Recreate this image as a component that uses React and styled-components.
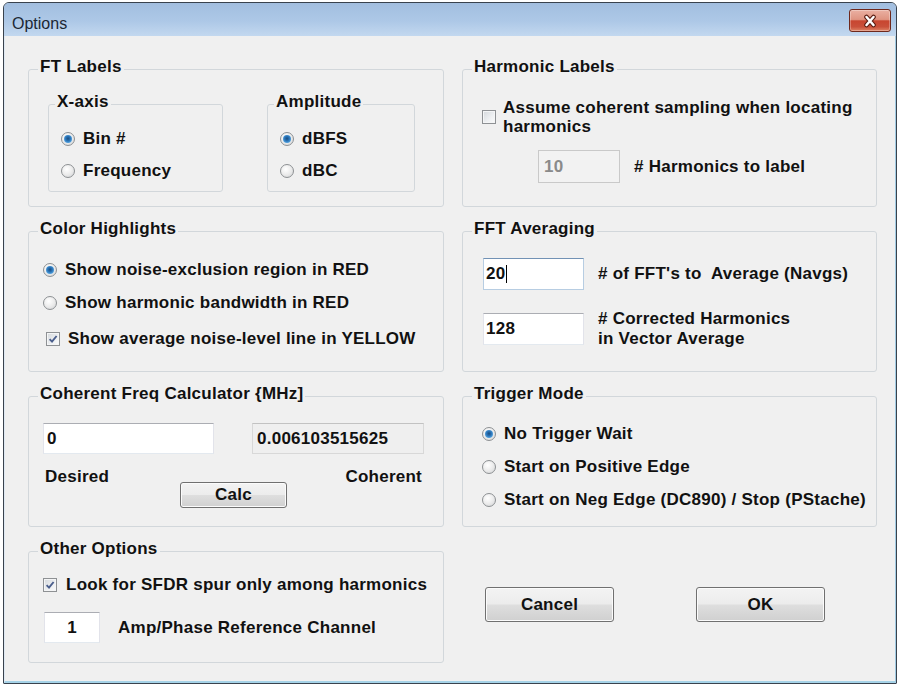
import React from "react";
import styled, { createGlobalStyle, css } from "styled-components";

const GlobalStyle = createGlobalStyle`
  html, body { margin: 0; padding: 0; background: #ffffff; }
  body { font-family: "Liberation Sans", Arial, sans-serif; color: #111; }
  * { box-sizing: border-box; }
`;

const Window = styled.div`
  margin: 2px 0 0 3px;
  width: 894px;
  height: 682px;
  border: 1px solid #39424d;
  border-radius: 6px 6px 1px 1px;
  background: #c2d8ef;
  display: flex;
  flex-direction: column;
  overflow: hidden;
`;

const TitleBar = styled.div`
  flex: none;
  height: 33px;
  display: flex;
  align-items: flex-start;
  justify-content: space-between;
  padding: 0 5px 0 8px;
  background: linear-gradient(to bottom, #a2bedf 0%, #adc8e7 55%, #c3d8ef 100%);
`;

const Title = styled.div`
  margin-top: 11px;
  font-size: 16px;
  line-height: 20px;
  color: #1b2734;
`;

const CloseButton = styled.div`
  margin-top: 6px;
  width: 42px;
  height: 23px;
  border: 1px solid #6e281c;
  border-radius: 3px;
  background: linear-gradient(
    to bottom,
    #eab0a2 0%,
    #df9481 45%,
    #c84630 52%,
    #c9503a 80%,
    #df8466 100%
  );
  box-shadow: inset 0 0 0 1px rgba(255, 255, 255, 0.3);
  display: flex;
  align-items: center;
  justify-content: center;
`;

const Client = styled.div`
  flex: 1;
  background: #f0f0f0;
  border-left: 1px solid #dfe9f3;
  border-right: 1px solid #a2cbe2;
  border-bottom: 2px solid #a6d3e8;
  display: grid;
  grid-template-columns: 416px 415px;
  grid-template-rows: 150px 153px 143px 124px;
  column-gap: 18px;
  row-gap: 12px;
  align-content: start;
  padding: 21px 0 0 23px;
  font-size: 17px;
  font-weight: 700;
  letter-spacing: 0.25px;
  line-height: 20px;
  color: #111;
`;

const Group = styled.fieldset`
  margin: 0;
  padding: 0;
  min-width: 0;
  border: 1px solid #d2d7db;
  border-radius: 3px;
  ${(p) =>
    p.$w &&
    css`
      width: ${p.$w}px;
      height: ${p.$h}px;
      flex: none;
    `}
`;

const Legend = styled.legend`
  margin-left: ${(p) => p.$indent}px;
  padding: 0 2px 5px;
  line-height: 20px;
`;

const GroupBody = styled.div`
  display: flex;
  flex-direction: ${(p) => (p.$row ? "row" : "column")};
  align-items: flex-start;
  gap: ${(p) => p.$gap || 0}px;
  padding: ${(p) => p.$pad};
`;

const OptionRow = styled.div`
  display: flex;
  align-items: center;
  gap: ${(p) => (p.$gap != null ? p.$gap : 8)}px;
  height: ${(p) => (p.$h ? `${p.$h}px` : "auto")};
  margin-top: ${(p) => p.$mt || 0}px;
  padding-left: ${(p) => p.$pl || 0}px;
`;

const Label = styled.span`
  white-space: nowrap;
  line-height: ${(p) => p.$lh || 20}px;
`;

const Radio = styled.span`
  flex: none;
  position: relative;
  width: 14px;
  height: 14px;
  border-radius: 50%;
  border: 1px solid #8d9093;
  background: radial-gradient(circle at 40% 35%, #ffffff 0%, #ececec 50%, #cfd1d3 100%);
  &::after {
    content: "";
    position: absolute;
    inset: 2px;
    border-radius: 50%;
    display: ${(p) => (p.$checked ? "block" : "none")};
    background: radial-gradient(circle at 50% 45%, #1b4d7e 0%, #2a74b8 40%, #5aa8e2 75%, #a8d6f4 100%);
  }
`;

const CheckBox = styled.span`
  flex: none;
  width: 14px;
  height: 14px;
  border: 1px solid #8e9194;
  background: linear-gradient(135deg, #d4d8dc 0%, #eef0f2 60%, #fbfbfb 100%);
  box-shadow: inset 0 0 0 1px #f4f5f6;
  display: flex;
  align-items: center;
  justify-content: center;
`;

const boxVariants = {
  normal: css`
    background: #ffffff;
    border-color: #e2e3ea;
    border-top-color: #abadb3;
    border-bottom-color: #e3e9ef;
  `,
  focus: css`
    background: #ffffff;
    border-color: #b7cde2;
    border-top-color: #7292b5;
  `,
  readonly: css`
    background: #efefef;
    border-color: #d8d8d8;
    border-top-color: #c2c2c2;
  `,
  disabled: css`
    background: #f2f2f2;
    border-color: #c9c9c9;
    color: #8a8a8a;
  `,
};

const TextBox = styled.div`
  flex: none;
  width: ${(p) => p.$w}px;
  height: ${(p) => p.$h}px;
  border: 1px solid;
  display: flex;
  align-items: center;
  justify-content: ${(p) => (p.$center ? "center" : "flex-start")};
  padding-left: ${(p) => (p.$center ? 0 : p.$pl || 3)}px;
  ${(p) => boxVariants[p.$variant || "normal"]}
`;

const Caret = styled.span`
  display: inline-block;
  width: 1px;
  height: 18px;
  margin-left: 1px;
  background: #000;
`;

const Button = styled.button`
  flex: none;
  width: ${(p) => p.$w}px;
  height: ${(p) => p.$h}px;
  margin-top: ${(p) => p.$mt || 0}px;
  padding: 0;
  font: inherit;
  letter-spacing: inherit;
  color: #111;
  border: 1px solid #707070;
  border-radius: 3px;
  background: linear-gradient(to bottom, #f3f3f3 0%, #ececec 48%, #dedede 52%, #d0d0d0 100%);
  box-shadow: inset 0 0 0 1px #fbfbfb;
`;

const FieldsRow = styled.div`
  display: flex;
  gap: 38px;
`;

const CalcRow = styled.div`
  width: 381px;
  margin-top: 13px;
  display: grid;
  grid-template-columns: 1fr auto 1fr;
  align-items: start;
`;

const SideLabel = styled.span`
  justify-self: ${(p) => (p.$end ? "end" : "start")};
  padding: ${(p) => (p.$end ? "0 2px 0 0" : "0 0 0 2px")};
`;

const ButtonArea = styled.div`
  display: flex;
  gap: 82px;
  padding: 48px 0 0 23px;
`;

const Check = () => (
  <svg width="10" height="10" viewBox="0 0 10 10">
    <path d="M1.6 5.2 L4 7.6 L8.6 2" stroke="#4a5e8c" strokeWidth="1.9" fill="none" />
  </svg>
);

export default function App() {
  return (
    <>
      <GlobalStyle />
      <Window>
        <TitleBar>
          <Title>Options</Title>
          <CloseButton>
            <svg width="16" height="14" viewBox="0 0 16 14">
              <path d="M4.5 3 L11.5 11 M11.5 3 L4.5 11" stroke="#5b1d12" strokeWidth="4.6" strokeLinecap="round" fill="none" />
              <path d="M4.5 3 L11.5 11 M11.5 3 L4.5 11" stroke="#ffffff" strokeWidth="2.5" strokeLinecap="round" fill="none" />
            </svg>
          </CloseButton>
        </TitleBar>
        <Client>
          <Group>
            <Legend $indent={9}>FT Labels</Legend>
            <GroupBody $row $gap={44} $pad="10px 0 0 19px">
              <Group $w={175} $h={100}>
                <Legend $indent={6}>X-axis</Legend>
                <GroupBody $pad="6px 0 0 12px">
                  <OptionRow $h={32}>
                    <Radio $checked />
                    <Label>Bin #</Label>
                  </OptionRow>
                  <OptionRow $h={32}>
                    <Radio />
                    <Label>Frequency</Label>
                  </OptionRow>
                </GroupBody>
              </Group>
              <Group $w={148} $h={100}>
                <Legend $indent={6}>Amplitude</Legend>
                <GroupBody $pad="6px 0 0 12px">
                  <OptionRow $h={32}>
                    <Radio $checked />
                    <Label>dBFS</Label>
                  </OptionRow>
                  <OptionRow $h={32}>
                    <Radio />
                    <Label>dBC</Label>
                  </OptionRow>
                </GroupBody>
              </Group>
            </GroupBody>
          </Group>

          <Group>
            <Legend $indent={9}>Harmonic Labels</Legend>
            <GroupBody $pad="16px 0 0 19px">
              <OptionRow $gap={7}>
                <CheckBox />
                <Label $lh={19}>
                  Assume coherent sampling when locating
                  <br />
                  harmonics
                </Label>
              </OptionRow>
              <OptionRow $gap={14} $mt={14} $pl={56}>
                <TextBox $w={82} $h={33} $variant="disabled" $pl={5}>
                  10
                </TextBox>
                <Label>{"# Harmonics to label"}</Label>
              </OptionRow>
            </GroupBody>
          </Group>

          <Group>
            <Legend $indent={9}>Color Highlights</Legend>
            <GroupBody $pad="10px 0 0 14px">
              <OptionRow $h={32}>
                <Radio $checked />
                <Label>Show noise-exclusion region in RED</Label>
              </OptionRow>
              <OptionRow $h={32} $mt={1}>
                <Radio />
                <Label>Show harmonic bandwidth in RED</Label>
              </OptionRow>
              <OptionRow $h={32} $mt={4} $pl={3}>
                <CheckBox>
                  <Check />
                </CheckBox>
                <Label>Show average noise-level line in YELLOW</Label>
              </OptionRow>
            </GroupBody>
          </Group>

          <Group>
            <Legend $indent={9}>FFT Averaging</Legend>
            <GroupBody $pad="14px 0 0 20px">
              <OptionRow $gap={14}>
                <TextBox $w={101} $h={32} $variant="focus" $pl={2}>
                  20
                  <Caret />
                </TextBox>
                <Label>{"# of FFT's to\u00a0 Average (Navgs)"}</Label>
              </OptionRow>
              <OptionRow $gap={14} $mt={19}>
                <TextBox $w={101} $h={32} $pl={2}>
                  128
                </TextBox>
                <Label $lh={20}>
                  # Corrected Harmonics
                  <br />
                  in Vector Average
                </Label>
              </OptionRow>
            </GroupBody>
          </Group>

          <Group>
            <Legend $indent={9}>Coherent Freq Calculator {"{MHz]"}</Legend>
            <GroupBody $pad="14px 0 0 14px">
              <FieldsRow>
                <TextBox $w={171} $h={31}>
                  0
                </TextBox>
                <TextBox $w={172} $h={31} $variant="readonly" $pl={4}>
                  0.006103515625
                </TextBox>
              </FieldsRow>
              <CalcRow>
                <SideLabel>Desired</SideLabel>
                <Button $w={107} $h={26} $mt={15}>
                  Calc
                </Button>
                <SideLabel $end>Coherent</SideLabel>
              </CalcRow>
            </GroupBody>
          </Group>

          <Group>
            <Legend $indent={9}>Trigger Mode</Legend>
            <GroupBody $pad="8px 0 0 19px">
              <OptionRow $h={33}>
                <Radio $checked />
                <Label>No Trigger Wait</Label>
              </OptionRow>
              <OptionRow $h={33}>
                <Radio />
                <Label>Start on Positive Edge</Label>
              </OptionRow>
              <OptionRow $h={33}>
                <Radio />
                <Label>Start on Neg Edge (DC890) / Stop (PStache)</Label>
              </OptionRow>
            </GroupBody>
          </Group>

          <Group>
            <Legend $indent={9}>Other Options</Legend>
            <GroupBody $pad="5px 0 0 14px">
              <OptionRow $h={32} $gap={9}>
                <CheckBox>
                  <Check />
                </CheckBox>
                <Label>Look for SFDR spur only among harmonics</Label>
              </OptionRow>
              <OptionRow $gap={18} $mt={11} $pl={1}>
                <TextBox $w={56} $h={31} $center>
                  1
                </TextBox>
                <Label>Amp/Phase Reference Channel</Label>
              </OptionRow>
            </GroupBody>
          </Group>

          <ButtonArea>
            <Button $w={129} $h={35}>
              Cancel
            </Button>
            <Button $w={129} $h={35}>
              OK
            </Button>
          </ButtonArea>
        </Client>
      </Window>
    </>
  );
}
